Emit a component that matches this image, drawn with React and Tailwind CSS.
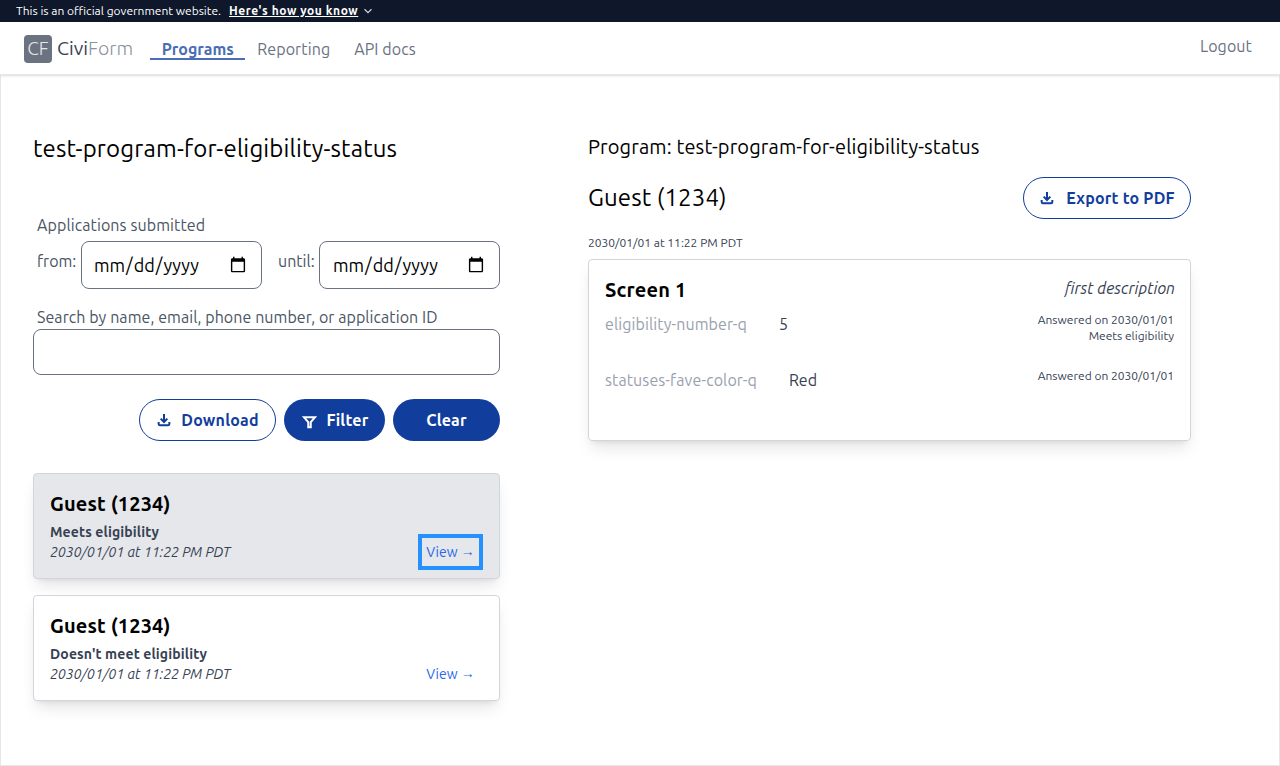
const dl = 'M4 15v3a2 2 0 0 0 2 2h12a2 2 0 0 0 2-2v-3M12 3v12m-5-5 5 5 5-5'

function DownloadIcon({ gap }) {
  return (
    <svg viewBox="0 0 24 24" className={`w-[16px] h-[16px] ${gap} shrink-0`} fill="none" stroke="currentColor" strokeWidth="3">
      <path d={dl} />
    </svg>
  )
}

function FilterIcon() {
  return (
    <svg viewBox="0 0 24 24" className="w-[15px] h-[15px] mr-[10px] ml-px mt-[3px] shrink-0" fill="none" stroke="currentColor" strokeWidth="3.2">
      <path d="M3 5h18l-7 8v8h-4v-8z" />
    </svg>
  )
}

function AppCard({ status, selected }) {
  return (
    <div className={`${selected ? 'bg-gray-200' : 'bg-white'} h-[106px] border border-gray-300 rounded shadow-lg pl-[16px] pr-[16px] pt-[16px] flex justify-between`}>
      <div>
        <div className="text-[20px] leading-[28px] font-bold text-black tracking-[0.15px]">Guest (1234)</div>
        <div className="text-[14px] leading-[20px] font-bold text-gray-700 mt-[4px] tracking-[0.13px]">{status}</div>
        <div className="text-[14px] leading-[20px] italic text-gray-700">2030/01/01 at 11:22 PM PDT</div>
      </div>
      <div className={`self-start mt-[44px] w-[65px] h-[36px] flex items-center justify-center text-[14px] leading-[20px] text-[#2968ea] ${selected ? 'border-[4px] border-[#2491ff]' : ''}`}>
        <span>View <span className="font-['Liberation_Sans',sans-serif] leading-[0] align-[1.5px]">→</span></span>
      </div>
    </div>
  )
}

export default function App() {
  return (
    <div className="h-[766px] overflow-hidden flex flex-col bg-white font-['Ubuntu','Noto_Sans',sans-serif]">
      <div className="h-[22px] bg-[#0f172a] text-white text-[12px] flex items-center pl-[16px]">
        <span>This is an official government website.</span>
        <span className="ml-[8px] font-bold underline tracking-[0.55px]">Here's how you know</span>
        <svg viewBox="0 0 24 24" className="w-[14px] h-[14px] ml-[3px]" fill="none" stroke="#d1d5db" strokeWidth="2">
          <path d="m6 9 6 6 6-6" />
        </svg>
      </div>
      <div className="relative h-[53px] flex items-start justify-between border-b border-gray-200 shadow-sm bg-white pl-[24px] pr-[28px]">
        <div className="flex items-start">
          <div className="flex items-center mt-[12px]">
            <div className="w-[28px] h-[28px] rounded bg-[#6b7280] text-gray-200 flex items-center justify-center text-[19px] font-light">CF</div>
            <span className="ml-[5px] text-[19.5px] text-gray-700">Civi</span>
            <span className="text-[19.5px] font-light text-[#8b93a0]">Form</span>
          </div>
          <div className="ml-[17px] mt-[16px] w-[95px] h-[22px] border-b-2 border-[#4a6db5] text-center text-[16px] leading-[22px] font-bold text-[#4a6db5]">Programs</div>
          <div className="ml-[12px] mt-[16px] text-[16px] leading-[22px] text-gray-500 tracking-[0.1px]">Reporting</div>
          <div className="ml-[24px] mt-[16px] text-[16px] leading-[22px] text-gray-500 tracking-[0.1px]">API docs</div>
        </div>
        <div className="mt-[13px] text-[16px] leading-[22px] text-gray-500 tracking-[0.1px]">Logout</div>
      </div>
      <div className="flex-1 flex border-x border-b border-gray-200 pl-[32px]">
        <div className="w-[467px] shrink-0 pt-[58px]">
          <h1 className="text-[24px] leading-[32px] text-black tracking-[0.17px]">test-program-for-eligibility-status</h1>
          <div className="mt-[48px] pl-[4px] text-[16px] leading-[24px] text-gray-600 tracking-[0.1px]">Applications submitted</div>
          <div className="mt-[4px] flex items-start">
            <span className="ml-[4px] mt-[8px] w-[44px] text-[16px] leading-[24px] text-gray-600">from:</span>
            <input type="date" className="w-[181px] h-[48px] border border-gray-500 rounded-lg pl-[11px] pr-[12px] text-[18px] text-black bg-white" />
            <span className="ml-[16px] mt-[8px] w-[41px] text-[16px] leading-[24px] text-gray-600">until:</span>
            <input type="date" className="w-[181px] h-[48px] border border-gray-500 rounded-lg px-[12px] text-[18px] text-black bg-white" />
          </div>
          <div className="mt-[16px] pl-[4px] text-[16px] leading-[24px] text-gray-600 tracking-[0.07px]">Search by name, email, phone number, or application ID</div>
          <input type="text" className="block w-full h-[46px] border border-gray-500 rounded-lg bg-white" />
          <div className="mt-[24px] flex justify-end gap-[8px]">
            <div className="h-[42px] w-[137px] rounded-full border border-[#113e9d] bg-white text-[#113e9d] font-bold text-[16px] tracking-[0.2px] flex items-center justify-center">
              <DownloadIcon gap="mr-[9px]" />
              Download
            </div>
            <div className="h-[42px] w-[101px] rounded-full bg-[#113e9d] text-white font-bold text-[16px] tracking-[0.2px] flex items-center justify-center">
              <FilterIcon />
              Filter
            </div>
            <div className="h-[42px] w-[107px] rounded-full bg-[#113e9d] text-white font-bold text-[16px] tracking-[0.2px] flex items-center justify-center">Clear</div>
          </div>
          <div className="mt-[32px] flex flex-col gap-[16px]">
            <AppCard status="Meets eligibility" selected />
            <AppCard status="Doesn't meet eligibility" />
          </div>
        </div>
        <div className="w-[603px] ml-[88px] shrink-0 pt-[56px]">
          <div className="text-[20px] leading-[32px] text-black tracking-[0.13px]">Program: test-program-for-eligibility-status</div>
          <div className="mt-[14px] flex items-center justify-between">
            <div className="text-[24px] leading-[32px] text-black tracking-[0.1px]">Guest (1234)</div>
            <div className="h-[42px] w-[168px] rounded-full border border-[#113e9d] bg-white text-[#113e9d] font-bold text-[16px] tracking-[0.2px] flex items-center justify-center">
              <DownloadIcon gap="mr-[11px]" />
              Export to PDF
            </div>
          </div>
          <div className="mt-[16px] text-[12px] leading-[16px] text-gray-700">2030/01/01 at 11:22 PM PDT</div>
          <div className="mt-[8px] h-[182px] border border-gray-300 rounded shadow-lg pl-[16px] pr-[15px] pt-[16px]">
            <div className="flex justify-between items-start">
              <div className="text-[20px] leading-[28px] font-bold text-black tracking-[0.2px]">Screen 1</div>
              <div className="text-[16px] leading-[24px] italic text-gray-700">first description</div>
            </div>
            <div className="mt-[8px] flex justify-between items-start h-[56px]">
              <div className="flex text-[16px] leading-[24px]">
                <span className="text-gray-400 tracking-[0.1px]">eligibility-number-q</span>
                <span className="ml-[32px] text-gray-700">5</span>
              </div>
              <div className="text-[12px] leading-[16px] text-gray-700 text-right pr-px">
                <div>Answered on 2030/01/01</div>
                <div>Meets eligibility</div>
              </div>
            </div>
            <div className="flex justify-between items-start">
              <div className="flex text-[16px] leading-[24px]">
                <span className="text-gray-400 tracking-[0.1px]">statuses-fave-color-q</span>
                <span className="ml-[32px] text-gray-700">Red</span>
              </div>
              <div className="text-[12px] leading-[16px] text-gray-700 text-right pr-px">Answered on 2030/01/01</div>
            </div>
          </div>
        </div>
      </div>
    </div>
  )
}
